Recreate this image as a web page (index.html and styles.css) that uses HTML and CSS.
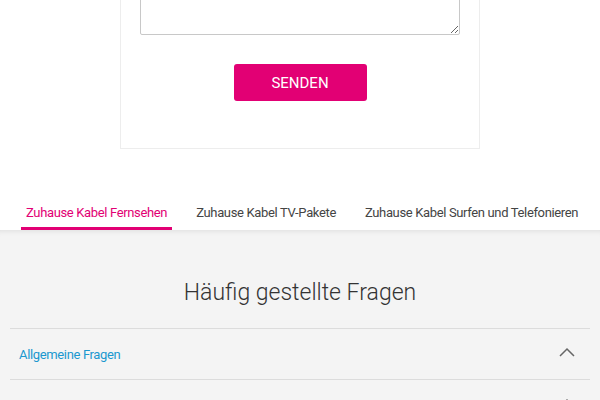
FILE: index.html
```html
<!DOCTYPE html>
<html lang="de">
<head>
    <meta charset="UTF-8">
    <meta name="viewport" content="width=device-width, initial-scale=1.0">
    <title>Zuhause Kabel Fernsehen</title>
    <link rel="stylesheet" href="styles.css">
</head>
<body>
    <div class="page">
        <form class="card" id="contactForm">
            <textarea class="message" name="message"></textarea>
            <button type="submit" class="send">SENDEN</button>
        </form>

        <nav class="tabs">
            <a href="#" class="tab active">Zuhause Kabel Fernsehen</a>
            <a href="#" class="tab">Zuhause Kabel TV-Pakete</a>
            <a href="#" class="tab">Zuhause Kabel Surfen und Telefonieren</a>
        </nav>

        <section class="faq">
            <h2>Häufig gestellte Fragen</h2>
            <div class="faq-item">
                <span>Allgemeine Fragen</span>
                <svg class="chevron" width="16" height="10" viewBox="0 0 16 10"><path d="M1 9 L8 2 L15 9" fill="none" stroke="#666" stroke-width="1.5"/></svg>
            </div>
            <div class="faq-item">
                <span>Tarife und Optionen</span>
                <svg class="chevron" width="16" height="10" viewBox="0 0 16 10"><path d="M1 9 L8 2 L15 9" fill="none" stroke="#666" stroke-width="1.5"/></svg>
            </div>
        </section>
    </div>
</body>
</html>
```

FILE: styles.css
```css
body {
    margin: 0;
    font-family: Roboto, "Liberation Sans", Arial, sans-serif;
    background-color: #fff;
    color: #333;
}

.page {
    margin-top: -80px;
}

.card {
    box-sizing: border-box;
    width: 360px;
    margin: 0 auto;
    padding: 20px 19px 47px;
    border: 1px solid #ededed;
    display: flex;
    flex-direction: column;
    align-items: center;
}

.message {
    box-sizing: border-box;
    width: 320px;
    height: 94px;
    border: 1px solid #c8c8c8;
    border-radius: 2px;
    resize: vertical;
    margin: 0;
}

.send {
    margin-top: 29px;
    width: 133px;
    height: 37px;
    border: none;
    border-radius: 3px;
    background-color: #e20074;
    color: #fff;
    font-family: Roboto, "Liberation Sans", Arial, sans-serif;
    font-size: 15px;
    cursor: pointer;
}

.tabs {
    display: flex;
    gap: 19px;
    padding-left: 21px;
    margin-top: 54px;
}

.tab {
    padding: 0 5px 4px;
    font-size: 13px;
    letter-spacing: -0.35px;
    line-height: 20px;
    white-space: nowrap;
    color: #444;
    text-decoration: none;
    border-bottom: 3px solid transparent;
}

.tab.active {
    color: #e20074;
    border-bottom-color: #e20074;
}

.faq {
    background-color: #f4f4f4;
    box-shadow: inset 0 6px 6px -6px rgba(0, 0, 0, 0.12);
    padding: 48px 10px 0;
    min-height: 200px;
}

.faq h2 {
    margin: 0 0 20px;
    text-align: center;
    font-size: 23px;
    font-weight: 300;
    line-height: 30px;
    color: #333;
}

.faq-item {
    display: flex;
    justify-content: space-between;
    align-items: center;
    height: 50px;
    padding: 0 9px;
    border-top: 1px solid #dcdcdc;
    font-size: 13px;
    letter-spacing: -0.35px;
    color: #1b98cf;
}

.chevron {
    margin-right: 6px;
    margin-top: -4px;
}
```
